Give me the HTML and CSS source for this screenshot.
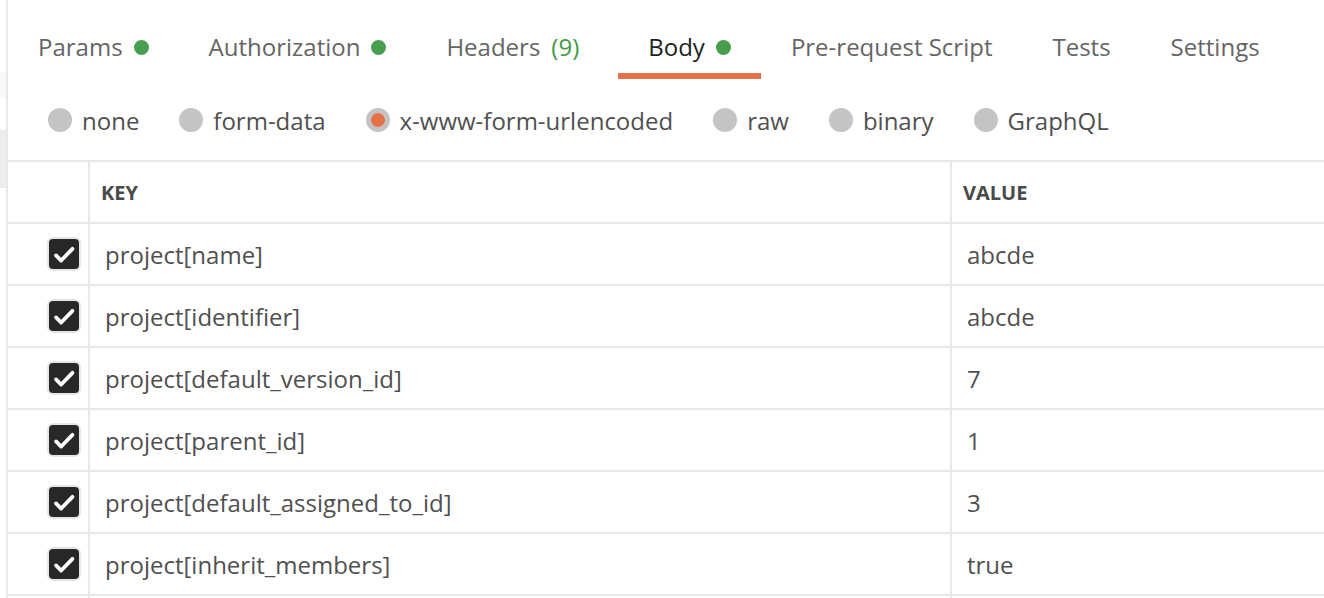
FILE: index.html
```html
<!DOCTYPE html>
<html>
<head>
<meta charset="utf-8">
<link rel="stylesheet" href="styles.css">
</head>
<body>
<div class="app">
  <div class="side">
    <div class="side-a"></div>
    <div class="side-b"></div>
  </div>
  <div class="main">
    <nav class="tabs">
      <div class="tab">Params <span class="dot"></span></div>
      <div class="tab">Authorization <span class="dot"></span></div>
      <div class="tab tab-headers">Headers <span class="count">(9)</span></div>
      <div class="tab active">Body <span class="dot"></span></div>
      <div class="tab">Pre-request Script</div>
      <div class="tab">Tests</div>
      <div class="tab">Settings</div>
    </nav>
    <div class="modes">
      <label class="mode"><span class="radio"></span>none</label>
      <label class="mode"><span class="radio"></span>form-data</label>
      <label class="mode"><span class="radio on"></span>x-www-form-urlencoded</label>
      <label class="mode"><span class="radio"></span>raw</label>
      <label class="mode"><span class="radio"></span>binary</label>
      <label class="mode"><span class="radio"></span>GraphQL</label>
    </div>
    <div class="table">
      <div class="row head">
        <div class="cell c-check"></div>
        <div class="cell c-key">KEY</div>
        <div class="cell c-val">VALUE</div>
      </div>
      <div class="row">
        <div class="cell c-check"><span class="cb"><svg viewBox="0 0 32 32"><path d="M7.5 17.5 L13 23 L25 10.5"/></svg></span></div>
        <div class="cell c-key">project[name]</div>
        <div class="cell c-val">abcde</div>
      </div>
      <div class="row">
        <div class="cell c-check"><span class="cb"><svg viewBox="0 0 32 32"><path d="M7.5 17.5 L13 23 L25 10.5"/></svg></span></div>
        <div class="cell c-key">project[identifier]</div>
        <div class="cell c-val">abcde</div>
      </div>
      <div class="row">
        <div class="cell c-check"><span class="cb"><svg viewBox="0 0 32 32"><path d="M7.5 17.5 L13 23 L25 10.5"/></svg></span></div>
        <div class="cell c-key">project[default_version_id]</div>
        <div class="cell c-val">7</div>
      </div>
      <div class="row">
        <div class="cell c-check"><span class="cb"><svg viewBox="0 0 32 32"><path d="M7.5 17.5 L13 23 L25 10.5"/></svg></span></div>
        <div class="cell c-key">project[parent_id]</div>
        <div class="cell c-val">1</div>
      </div>
      <div class="row">
        <div class="cell c-check"><span class="cb"><svg viewBox="0 0 32 32"><path d="M7.5 17.5 L13 23 L25 10.5"/></svg></span></div>
        <div class="cell c-key">project[default_assigned_to_id]</div>
        <div class="cell c-val">3</div>
      </div>
      <div class="row">
        <div class="cell c-check"><span class="cb"><svg viewBox="0 0 32 32"><path d="M7.5 17.5 L13 23 L25 10.5"/></svg></span></div>
        <div class="cell c-key">project[inherit_members]</div>
        <div class="cell c-val">true</div>
      </div>
      <div class="row">
        <div class="cell c-check"></div>
        <div class="cell c-key"></div>
        <div class="cell c-val"></div>
      </div>
    </div>
  </div>
</div>
</body>
</html>
```
FILE: styles.css
```css
* { box-sizing: border-box; }
html, body {
  margin: 0;
  padding: 0;
  background: #ffffff;
  overflow: hidden;
}
body {
  font-family: "Open Sans", "Noto Sans", sans-serif;
  font-size: 24px;
  color: #505050;
  width: 1324px;
  height: 598px;
}
.app {
  display: flex;
  height: 598px;
  overflow: hidden;
}
.side {
  width: 8px;
  flex: none;
  border-right: 2px solid #e8e8e8;
  display: flex;
  flex-direction: column;
}
.side-a {
  margin-top: 72px;
  height: 26px;
  background: #f8f8f8;
  flex: none;
}
.side-b {
  margin-top: 32px;
  height: 58px;
  background: #ececec;
  flex: none;
}
.main {
  flex: 1;
  min-width: 0;
  display: flex;
  flex-direction: column;
}
.tabs {
  display: flex;
  height: 80px;
  flex: none;
}
.tab {
  display: flex;
  align-items: center;
  gap: 11px;
  padding: 29px 30px 8px;
  height: 79px;
  line-height: 36px;
  color: #656565;
  border-bottom: 6px solid transparent;
  white-space: nowrap;
}
.tab-headers { padding-right: 39px; }
.tab.active {
  color: #1f1f1f;
  border-bottom-color: #e4714a;
}
.dot {
  width: 15px;
  height: 15px;
  border-radius: 50%;
  background: #479e4e;
  display: inline-block;
}
.count { color: #3f9a48; }
.modes {
  display: flex;
  align-items: center;
  flex: none;
  height: 80px;
  padding-left: 40px;
  gap: 40px;
  color: #505050;
}
.mode {
  display: flex;
  align-items: center;
  gap: 10px;
  white-space: nowrap;
}
.radio {
  width: 24px;
  height: 24px;
  border-radius: 50%;
  background: #c4c4c4;
  display: flex;
  align-items: center;
  justify-content: center;
}
.radio.on::after {
  content: "";
  width: 14px;
  height: 14px;
  border-radius: 50%;
  background: #e4714a;
}
.table {
  border-top: 2px solid #e8e8e8;
  flex: none;
}
.row {
  display: flex;
  height: 62px;
  border-bottom: 2px solid #e8e8e8;
}
.cell {
  display: flex;
  align-items: center;
  white-space: nowrap;
}
.c-check {
  width: 82px;
  border-right: 2px solid #e8e8e8;
  justify-content: flex-end;
  padding-right: 7px;
}
.c-key {
  width: 862px;
  border-right: 2px solid #e8e8e8;
  padding-left: 15px;
}
.c-val {
  flex: 1;
  padding-left: 15px;
}
.head .cell {
  font-size: 20px;
  font-weight: 700;
  color: #4a4a4a;
}
.head .c-key, .head .c-val { padding-left: 11px; }
.cb {
  width: 34px;
  height: 34px;
  border-radius: 6px;
  background: #282828;
  border: 2px solid #e6e6e6;
  display: flex;
}
.cb svg {
  width: 30px;
  height: 30px;
}
.cb path {
  fill: none;
  stroke: #ffffff;
  stroke-width: 4;
  stroke-linecap: round;
  stroke-linejoin: round;
}
```
